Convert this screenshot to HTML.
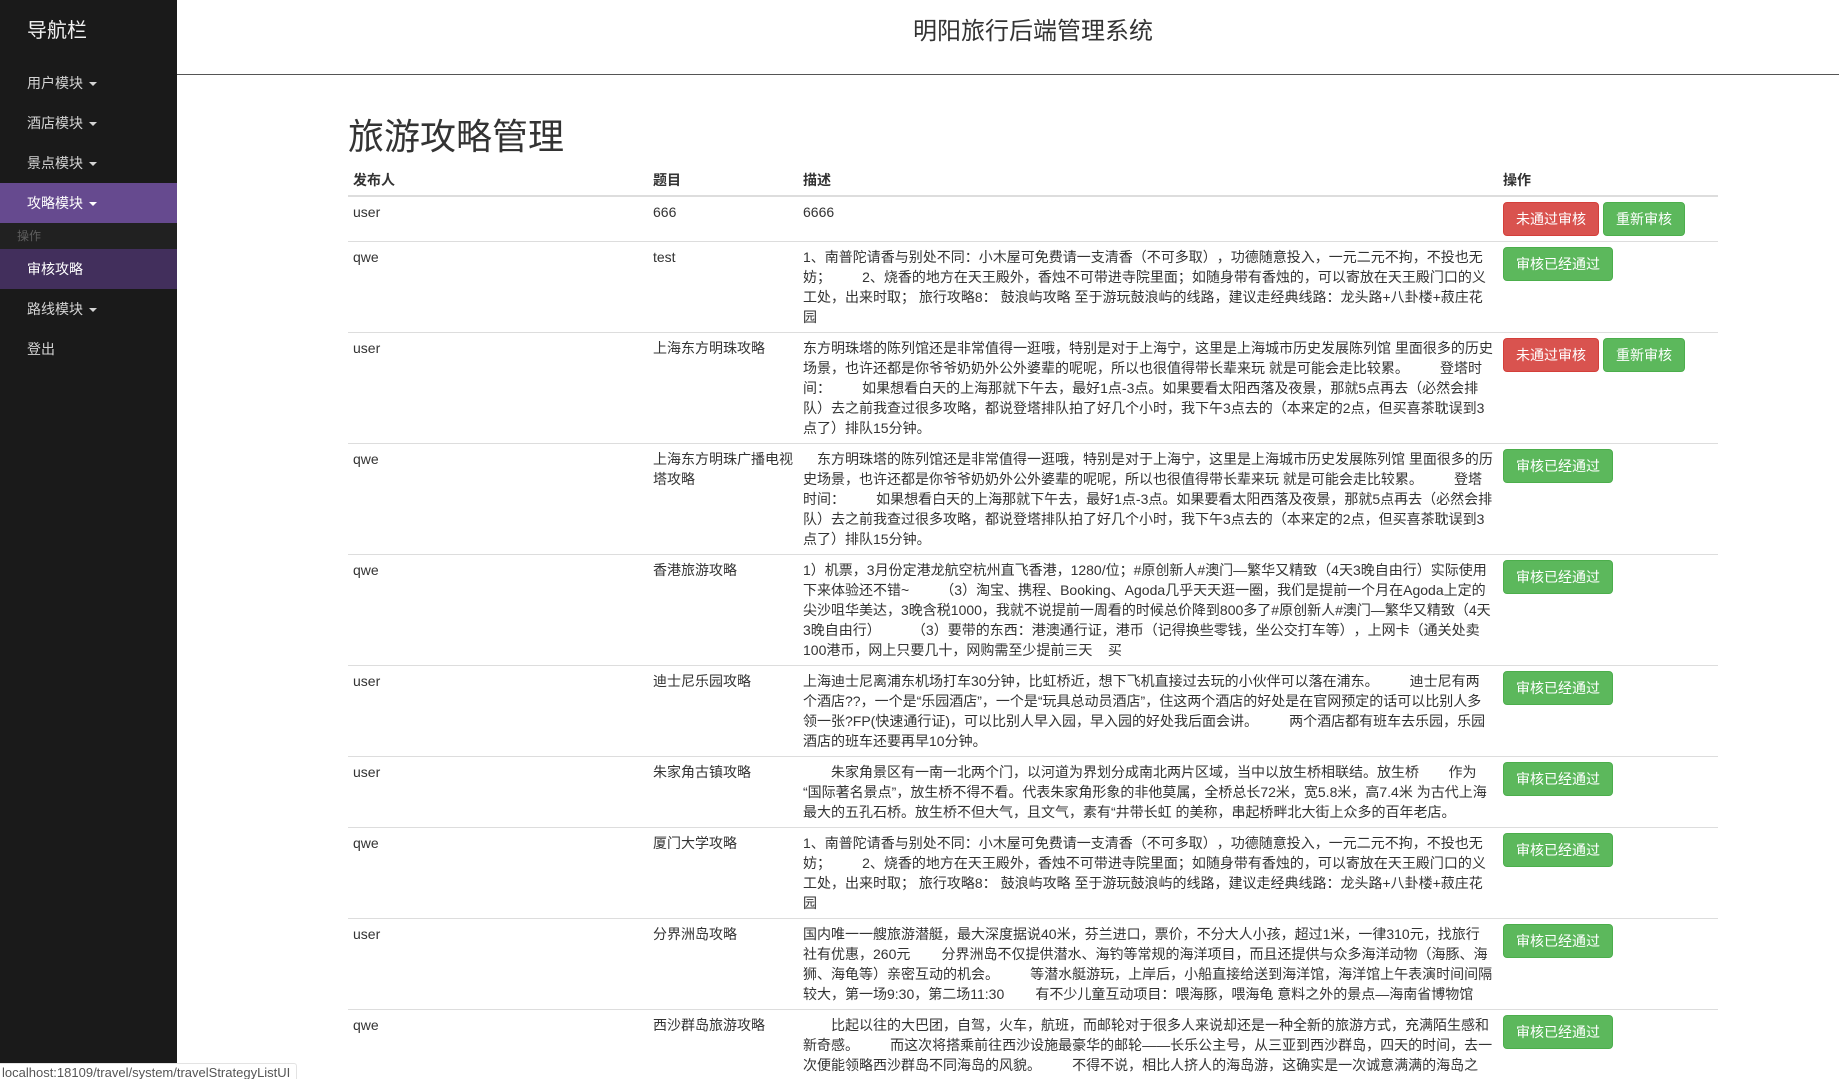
<!DOCTYPE html>
<html lang="zh-CN">
<head>
<meta charset="utf-8">
<title>旅游攻略管理</title>
<style>
*{box-sizing:border-box}
html,body{margin:0;padding:0;width:1839px;height:1079px;overflow:hidden;background:#fff}
body{font-family:"Liberation Sans","Noto Sans CJK SC",sans-serif;font-size:14px;line-height:20px;color:#333;text-spacing-trim:space-all}
#side{position:absolute;left:0;top:0;width:177px;height:1079px;background:#1a1a1a}
#brand{position:absolute;left:27px;top:17px;font-size:20px;line-height:28px;color:#f0f0f0}
.nav{position:absolute;left:0;width:177px;height:40px;line-height:40px;padding-left:27px;color:#d4d4d4}
.caret{display:inline-block;width:0;height:0;margin-left:6px;vertical-align:middle;border-top:4px solid currentColor;border-left:4px solid transparent;border-right:4px solid transparent}
.on{background:#664a8f;color:#fff}
.sub{background:#422f5c;color:#fff}
#lab{position:absolute;left:0;top:223px;width:177px;height:26px;line-height:26px;padding-left:17px;background:#212121;color:#5e5e5e;font-size:12px}
#title{position:absolute;left:913px;top:15px;font-size:24px;line-height:34px;white-space:nowrap;color:#333}
#rule{position:absolute;left:177px;top:74px;width:1662px;height:1px;background:#555}
h1{position:absolute;left:348px;top:115px;margin:0;font-size:36px;line-height:44px;font-weight:400;color:#333}
table{position:absolute;left:348px;top:165px;width:1370px;border-collapse:collapse;table-layout:fixed}
th,td{padding:5px;text-align:left;vertical-align:top;white-space:pre;line-height:20px;font-size:14px}
th{border-bottom:2px solid #ddd;font-weight:700}
td{border-top:1px solid #ddd}
.btn{display:inline-block;height:34px;padding:6px 12px;border:1px solid;border-radius:4px;color:#fff;font-size:14px;line-height:20px;vertical-align:top}
.r{background:#d9534f;border-color:#d43f3a;margin-right:4px}
.g{background:#5cb85c;border-color:#4cae4c}
#status{position:absolute;left:0;top:1063px;width:297px;height:16px;background:#fff;border:1px solid #e3e3e3;border-left:0;border-bottom:0;border-radius:0 3px 0 0;padding-left:2px;font-size:13px;line-height:17px;color:#555;white-space:nowrap;overflow:hidden}
</style>
</head>
<body>
<div id="side">
<div id="brand">导航栏</div>
<div class="nav" style="top:63px">用户模块<span class="caret"></span></div>
<div class="nav" style="top:103px">酒店模块<span class="caret"></span></div>
<div class="nav" style="top:143px">景点模块<span class="caret"></span></div>
<div class="nav on" style="top:183px">攻略模块<span class="caret"></span></div>
<div id="lab">操作</div>
<div class="nav sub" style="top:249px">审核攻略</div>
<div class="nav" style="top:289px">路线模块<span class="caret"></span></div>
<div class="nav" style="top:329px">登出</div>
</div>
<div id="title">明阳旅行后端管理系统</div>
<div id="rule"></div>
<h1>旅游攻略管理</h1>
<table>
<colgroup><col style="width:300px"><col style="width:150px"><col style="width:700px"><col style="width:220px"></colgroup>
<thead><tr><th>发布人</th><th>题目</th><th>描述</th><th>操作</th></tr></thead>
<tbody>
<tr><td>user</td><td>666</td><td>6666</td><td><span class="btn r">未通过审核</span><span class="btn g">重新审核</span></td></tr>
<tr><td>qwe</td><td>test</td><td>1、南普陀请香与别处不同：小木屋可免费请一支清香（不可多取），功德随意投入，一元二元不拘，不投也无<br>妨；        2、烧香的地方在天王殿外，香烛不可带进寺院里面；如随身带有香烛的，可以寄放在天王殿门口的义<br>工处，出来时取； 旅行攻略8： 鼓浪屿攻略 至于游玩鼓浪屿的线路，建议走经典线路：龙头路+八卦楼+菽庄花<br>园</td><td><span class="btn g">审核已经通过</span></td></tr>
<tr><td>user</td><td>上海东方明珠攻略</td><td>东方明珠塔的陈列馆还是非常值得一逛哦，特别是对于上海宁，这里是上海城市历史发展陈列馆 里面很多的历史<br>场景，也许还都是你爷爷奶奶外公外婆辈的呢呢，所以也很值得带长辈来玩 就是可能会走比较累。        登塔时<br>间：        如果想看白天的上海那就下午去，最好1点-3点。如果要看太阳西落及夜景，那就5点再去（必然会排<br>队）去之前我查过很多攻略，都说登塔排队拍了好几个小时，我下午3点去的（本来定的2点，但买喜茶耽误到3<br>点了）排队15分钟。</td><td><span class="btn r">未通过审核</span><span class="btn g">重新审核</span></td></tr>
<tr><td>qwe</td><td>上海东方明珠广播电视<br>塔攻略</td><td>　东方明珠塔的陈列馆还是非常值得一逛哦，特别是对于上海宁，这里是上海城市历史发展陈列馆 里面很多的历<br>史场景，也许还都是你爷爷奶奶外公外婆辈的呢呢，所以也很值得带长辈来玩 就是可能会走比较累。        登塔<br>时间：        如果想看白天的上海那就下午去，最好1点-3点。如果要看太阳西落及夜景，那就5点再去（必然会排<br>队）去之前我查过很多攻略，都说登塔排队拍了好几个小时，我下午3点去的（本来定的2点，但买喜茶耽误到3<br>点了）排队15分钟。</td><td><span class="btn g">审核已经通过</span></td></tr>
<tr><td>qwe</td><td>香港旅游攻略</td><td>1）机票，3月份定港龙航空杭州直飞香港，1280/位；#原创新人#澳门—繁华又精致（4天3晚自由行）实际使用<br>下来体验还不错~        （3）淘宝、携程、Booking、Agoda几乎天天逛一圈，我们是提前一个月在Agoda上定的<br>尖沙咀华美达，3晚含税1000，我就不说提前一周看的时候总价降到800多了#原创新人#澳门—繁华又精致（4天<br>3晚自由行）        （3）要带的东西：港澳通行证，港币（记得换些零钱，坐公交打车等），上网卡（通关处卖<br>100港币，网上只要几十，网购需至少提前三天    买</td><td><span class="btn g">审核已经通过</span></td></tr>
<tr><td>user</td><td>迪士尼乐园攻略</td><td>上海迪士尼离浦东机场打车30分钟，比虹桥近，想下飞机直接过去玩的小伙伴可以落在浦东。        迪士尼有两<br>个酒店??，一个是“乐园酒店”，一个是“玩具总动员酒店”，住这两个酒店的好处是在官网预定的话可以比别人多<br>领一张?FP(快速通行证)，可以比别人早入园，早入园的好处我后面会讲。        两个酒店都有班车去乐园，乐园<br>酒店的班车还要再早10分钟。</td><td><span class="btn g">审核已经通过</span></td></tr>
<tr><td>user</td><td>朱家角古镇攻略</td><td>　　朱家角景区有一南一北两个门，以河道为界划分成南北两片区域，当中以放生桥相联结。放生桥    　作为<br>“国际著名景点”，放生桥不得不看。代表朱家角形象的非他莫属，全桥总长72米，宽5.8米，高7.4米 为古代上海<br>最大的五孔石桥。放生桥不但大气，且文气，素有“井带长虹 的美称，串起桥畔北大街上众多的百年老店。</td><td><span class="btn g">审核已经通过</span></td></tr>
<tr><td>qwe</td><td>厦门大学攻略</td><td>1、南普陀请香与别处不同：小木屋可免费请一支清香（不可多取），功德随意投入，一元二元不拘，不投也无<br>妨；        2、烧香的地方在天王殿外，香烛不可带进寺院里面；如随身带有香烛的，可以寄放在天王殿门口的义<br>工处，出来时取； 旅行攻略8： 鼓浪屿攻略 至于游玩鼓浪屿的线路，建议走经典线路：龙头路+八卦楼+菽庄花<br>园</td><td><span class="btn g">审核已经通过</span></td></tr>
<tr><td>user</td><td>分界洲岛攻略</td><td>国内唯一一艘旅游潜艇，最大深度据说40米，芬兰进口，票价，不分大人小孩，超过1米，一律310元，找旅行<br>社有优惠，260元        分界洲岛不仅提供潜水、海钓等常规的海洋项目，而且还提供与众多海洋动物（海豚、海<br>狮、海龟等）亲密互动的机会。        等潜水艇游玩，上岸后，小船直接给送到海洋馆，海洋馆上午表演时间间隔<br>较大，第一场9:30，第二场11:30        有不少儿童互动项目：喂海豚，喂海龟 意料之外的景点—海南省博物馆</td><td><span class="btn g">审核已经通过</span></td></tr>
<tr><td>qwe</td><td>西沙群岛旅游攻略</td><td>　　比起以往的大巴团，自驾，火车，航班，而邮轮对于很多人来说却还是一种全新的旅游方式，充满陌生感和<br>新奇感。        而这次将搭乘前往西沙设施最豪华的邮轮——长乐公主号，从三亚到西沙群岛，四天的时间，去一<br>次便能领略西沙群岛不同海岛的风貌。        不得不说，相比人挤人的海岛游，这确实是一次诚意满满的海岛之</td><td><span class="btn g">审核已经通过</span></td></tr>
</tbody>
</table>
<div id="status">localhost:18109/travel/system/travelStrategyListUI</div>
</body>
</html>
